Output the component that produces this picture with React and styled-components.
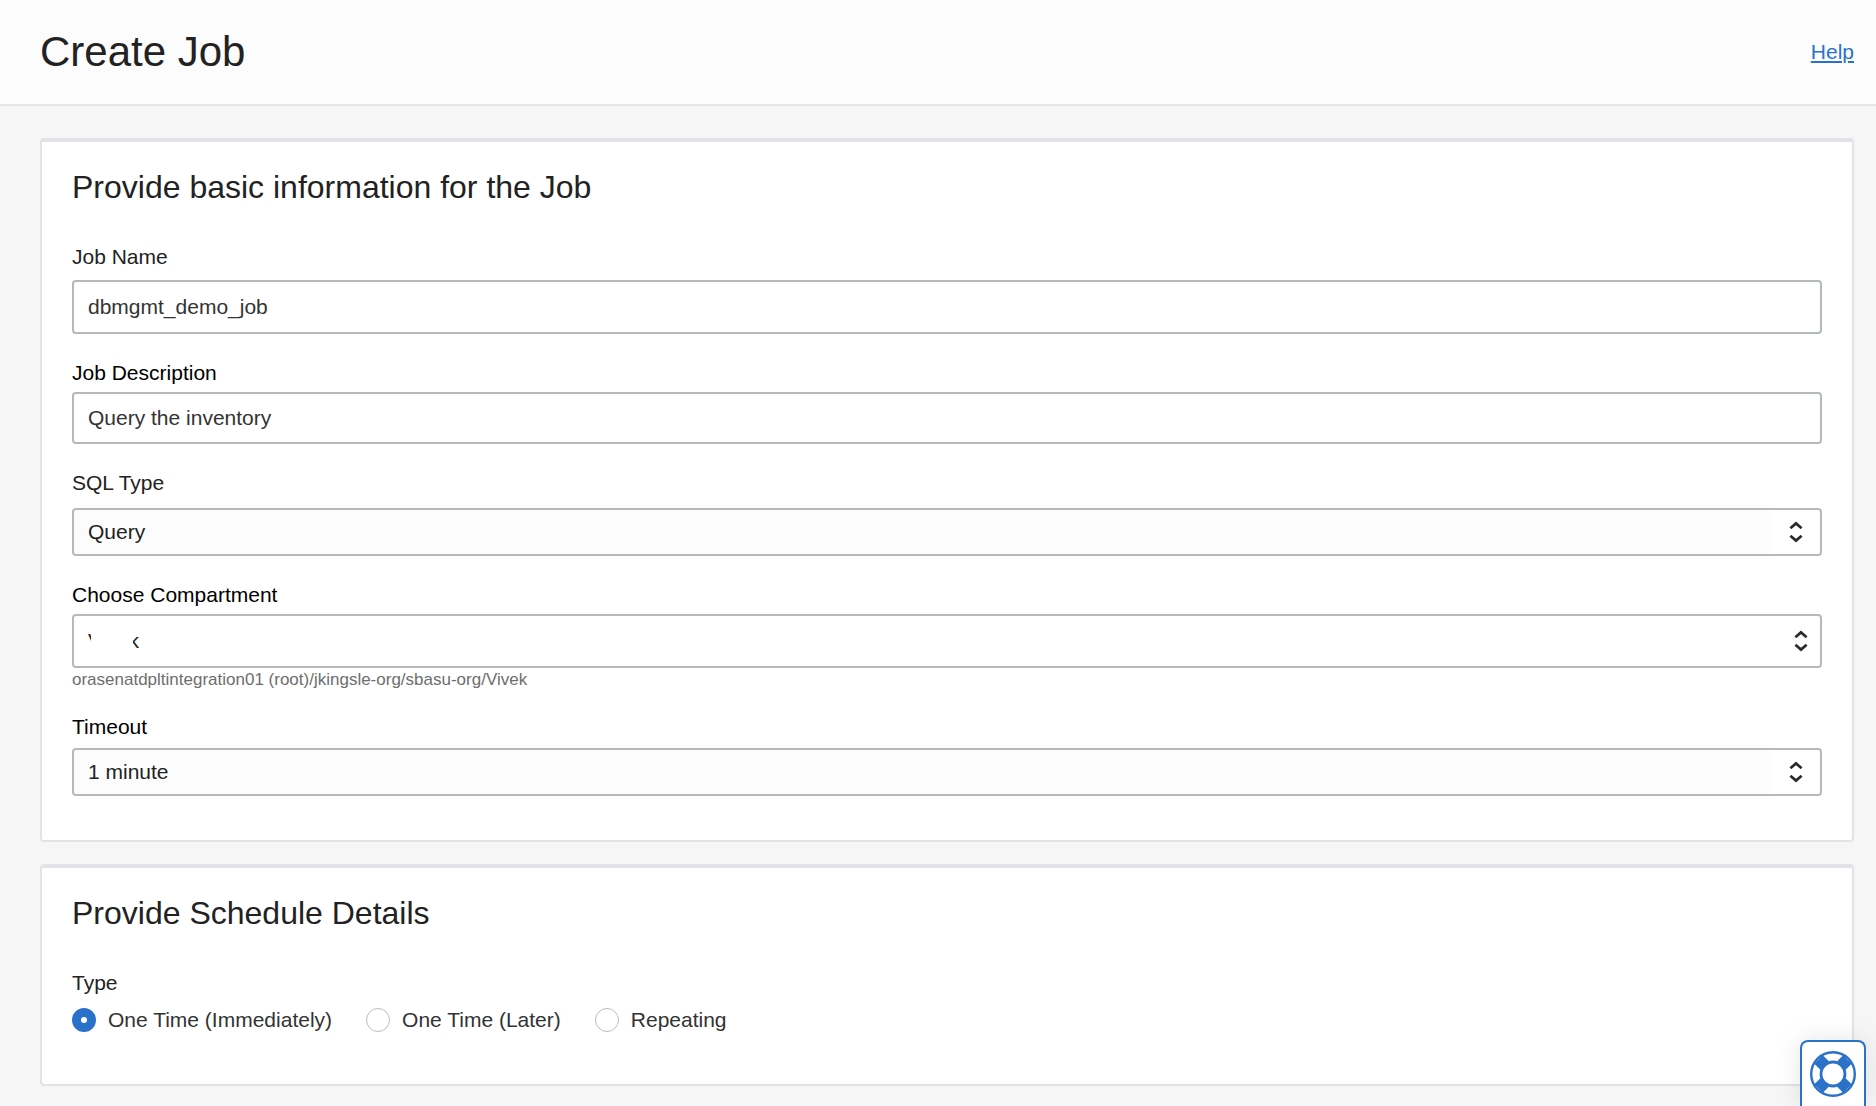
import React, { useState } from "react";
import styled, { createGlobalStyle, css } from "styled-components";

const BLUE = "#2a71c9";
const FONT = '"Liberation Sans", Arial, sans-serif';

const GlobalStyle = createGlobalStyle`
  *, *::before, *::after { box-sizing: border-box; }
  body {
    margin: 0;
    background: #f6f6f6;
    color: #222222;
    font-family: ${FONT};
    font-size: 21px;
    line-height: 26px;
  }
  button, input, select { font: inherit; }
`;

const Header = styled.header`
  display: flex;
  align-items: center;
  justify-content: space-between;
  padding: 27px 22px 27px 40px;
  background: #fcfcfc;
  border-bottom: 2px solid #e6e6e6;
`;

const PageTitle = styled.h1`
  margin: 0;
  font-size: 42px;
  line-height: 50px;
  font-weight: 400;
`;

const HelpLink = styled.a`
  color: ${BLUE};
  text-decoration: underline;
  text-decoration-thickness: 2px;
  text-underline-offset: 2px;
`;

const Main = styled.main`
  display: flex;
  flex-direction: column;
  gap: 22px;
  padding: 32px 22px 20px 40px;
`;

const Card = styled.section`
  padding: 24px 30px ${(p) => p.$bottom}px;
  background: #ffffff;
  border: 2px solid #e2e3e6;
  border-top: 4px solid #e1e3e6;
  border-radius: 4px;
`;

const CardTitle = styled.h2`
  margin: 0 0 36px;
  font-size: 32px;
  line-height: 42px;
  font-weight: 400;
`;

const Fields = styled.div`
  display: flex;
  flex-direction: column;
  gap: 26px;
`;

const Field = styled.div`
  display: flex;
  flex-direction: column;
`;

const Label = styled.label`
  align-self: flex-start;
  margin-bottom: ${(p) => p.$gap}px;
  color: ${(p) => (p.$strong ? "#000000" : "#222222")};
`;

const control = css`
  width: 100%;
  height: ${(p) => p.$height}px;
  margin: 0;
  padding: 0 14px;
  border: 2px solid #b4b9be;
  border-radius: 4px;
  outline: none;
  &:focus-visible { border-color: ${BLUE}; }
`;

const TextInput = styled.input`
  ${control}
  background: #ffffff;
  color: #333333;
`;

const SelectFrame = styled.div`
  position: relative;
  display: flex;
  align-items: center;
`;

const SelectBox = styled.select`
  ${control}
  appearance: none;
  color: #222222;
  background: ${(p) =>
    p.$plain ? "#ffffff" : "linear-gradient(to left, #ffffff 48px, #fcfcfc 48px)"};
`;

const Arrows = styled.svg`
  position: absolute;
  right: ${(p) => p.$right}px;
  width: 14px;
  height: 22px;
  pointer-events: none;
`;

const Redaction = styled.span`
  position: absolute;
  left: 19px;
  width: 42px;
  height: 26px;
  background: #ffffff;
  pointer-events: none;
`;

const Hint = styled.p`
  margin: 4px 0 0;
  color: #6e6e6e;
  font-size: 17px;
  line-height: 16px;
`;

const RadioGroup = styled.fieldset`
  margin: 0;
  padding: 0;
  border: 0;
`;

const Legend = styled.legend`
  margin: 0 0 12px;
  padding: 0;
`;

const RadioRow = styled.div`
  display: flex;
  flex-wrap: wrap;
  gap: 34px;
`;

const RadioLabel = styled.label`
  display: flex;
  align-items: center;
  gap: 12px;
  color: #333333;
  line-height: 24px;
`;

const Radio = styled.input`
  appearance: none;
  width: 24px;
  height: 24px;
  margin: 0;
  border: 1px solid #bdbdbd;
  border-radius: 50%;
  background: #ffffff;
  &:checked {
    border: 9px solid ${BLUE};
  }
`;

const SupportButton = styled.button`
  position: fixed;
  right: 10px;
  bottom: 0;
  display: flex;
  justify-content: center;
  width: 66px;
  height: 66px;
  padding: 9px 0 0;
  border: 2px solid ${BLUE};
  border-bottom: 0;
  border-radius: 8px 8px 0 0;
  background: #ffffff;
  box-shadow: 0 0 28px rgba(0, 0, 0, 0.1);
`;

function SelectField({ id, label, gap, strong, height, options, plain, redacted, hint }) {
  const [value, setValue] = useState(options[0]);
  return (
    <Field>
      <Label htmlFor={id} $gap={gap} $strong={strong}>{label}</Label>
      <SelectFrame>
        <SelectBox
          id={id}
          $height={height}
          $plain={plain}
          value={value}
          onChange={(e) => setValue(e.target.value)}
        >
          {options.map((o) => <option key={o}>{o}</option>)}
        </SelectBox>
        {redacted && <Redaction />}
        <Arrows viewBox="0 0 14 22" $right={plain ? 14 : 19} aria-hidden="true">
          <path
            d="M1.4 7.2 7 2.4l5.6 4.8M1.4 14.8 7 19.6l5.6-4.8"
            fill="none"
            stroke="#2b2b2b"
            strokeWidth="2.7"
          />
        </Arrows>
      </SelectFrame>
      {hint && <Hint>{hint}</Hint>}
    </Field>
  );
}

function TextField({ id, label, gap, strong, height, initial }) {
  return (
    <Field>
      <Label htmlFor={id} $gap={gap} $strong={strong}>{label}</Label>
      <TextInput id={id} type="text" $height={height} defaultValue={initial} />
    </Field>
  );
}

function LifeRing() {
  return (
    <svg width="46" height="46" viewBox="0 0 46 46" aria-hidden="true">
      <g fill="none" stroke={BLUE}>
        <circle cx="23" cy="23" r="21.8" strokeWidth="2.4" />
        <circle cx="23" cy="23" r="12" strokeWidth="2.8" />
        <path
          d="M8.6 8.6 14.6 14.6M37.4 8.6 31.4 14.6M8.6 37.4 14.6 31.4M37.4 37.4 31.4 31.4"
          strokeWidth="12"
        />
      </g>
    </svg>
  );
}

const SCHEDULES = ["One Time (Immediately)", "One Time (Later)", "Repeating"];

export default function App() {
  const [schedule, setSchedule] = useState(SCHEDULES[0]);
  return (
    <>
      <GlobalStyle />
      <Header>
        <PageTitle>Create Job</PageTitle>
        <HelpLink href="#help">Help</HelpLink>
      </Header>
      <Main>
        <Card $bottom={44}>
          <CardTitle>Provide basic information for the Job</CardTitle>
          <Fields>
            <TextField id="job-name" label="Job Name" gap={10} height={54} initial="dbmgmt_demo_job" />
            <TextField id="job-description" label="Job Description" strong gap={6} height={52} initial="Query the inventory" />
            <SelectField id="sql-type" label="SQL Type" gap={12} height={48} options={["Query"]} />
            <SelectField
              id="compartment"
              label="Choose Compartment"
              strong
              gap={6}
              height={54}
              options={["Vivek"]}
              plain
              redacted
              hint="orasenatdpltintegration01 (root)/jkingsle-org/sbasu-org/Vivek"
            />
            <SelectField id="timeout" label="Timeout" strong gap={8} height={48} options={["1 minute"]} />
          </Fields>
        </Card>
        <Card $bottom={52}>
          <CardTitle>Provide Schedule Details</CardTitle>
          <RadioGroup>
            <Legend>Type</Legend>
            <RadioRow>
              {SCHEDULES.map((s) => (
                <RadioLabel key={s}>
                  <Radio
                    type="radio"
                    name="schedule"
                    value={s}
                    checked={schedule === s}
                    onChange={() => setSchedule(s)}
                  />
                  {s}
                </RadioLabel>
              ))}
            </RadioRow>
          </RadioGroup>
        </Card>
      </Main>
      <SupportButton type="button" aria-label="Support">
        <LifeRing />
      </SupportButton>
    </>
  );
}
